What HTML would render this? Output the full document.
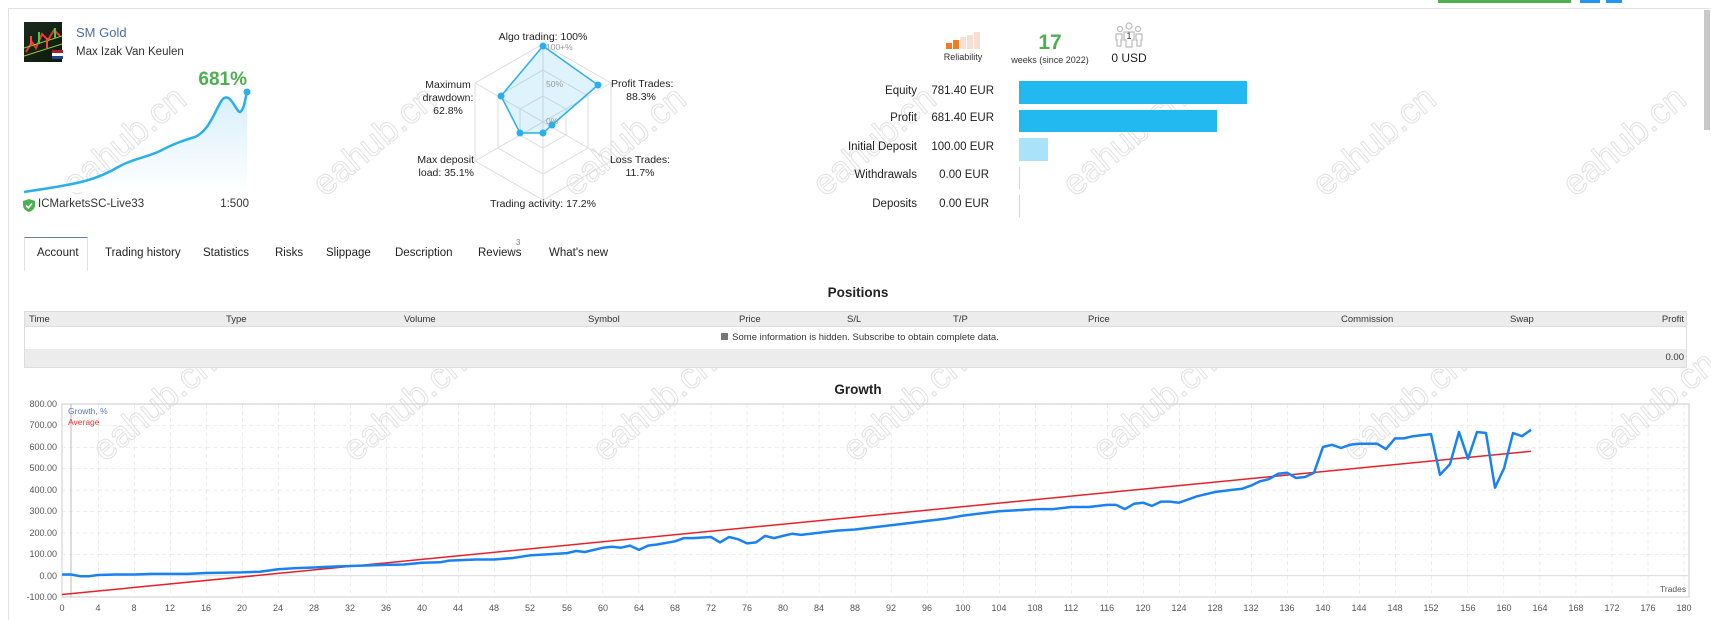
<!DOCTYPE html>
<html><head><meta charset="utf-8"><style>
*{margin:0;padding:0;box-sizing:border-box}
body{width:1711px;height:620px;background:#fff;font-family:"Liberation Sans",Arial,sans-serif;color:#222;position:relative;overflow:hidden;font-size:12px}
.a{position:absolute;white-space:nowrap}
.r{text-align:right}
.c{text-align:center}
.wm{position:absolute;font-size:36px;color:transparent;-webkit-text-stroke:1px #e2e2e2;transform:rotate(-40deg);font-family:"Liberation Sans",sans-serif;white-space:nowrap}
</style></head><body>
<div class="a" style="left:8px;top:8px;width:1px;height:612px;background:#e2e2e2"></div>
<div class="a" style="left:8px;top:8px;width:1703px;height:1px;background:#e2e2e2"></div>
<div class="a" style="left:1438px;top:0;width:133px;height:3px;background:#4caf50"></div>
<div class="a" style="left:1580px;top:0;width:20px;height:3px;background:#2196f3"></div>
<div class="a" style="left:1606px;top:0;width:16px;height:3px;background:#2196f3"></div>
<div class="a" style="left:1704px;top:10px;width:6px;height:120px;background:#c8c8c8"></div>

<!-- watermarks -->
<div class="wm" style="left:50px;top:120px">eahub.cn</div>
<div class="wm" style="left:300px;top:120px">eahub.cn</div>
<div class="wm" style="left:550px;top:120px">eahub.cn</div>
<div class="wm" style="left:800px;top:120px">eahub.cn</div>
<div class="wm" style="left:1050px;top:120px">eahub.cn</div>
<div class="wm" style="left:1300px;top:120px">eahub.cn</div>
<div class="wm" style="left:1550px;top:120px">eahub.cn</div>
<div class="wm" style="left:80px;top:385px">eahub.cn</div>
<div class="wm" style="left:330px;top:385px">eahub.cn</div>
<div class="wm" style="left:580px;top:385px">eahub.cn</div>
<div class="wm" style="left:830px;top:385px">eahub.cn</div>
<div class="wm" style="left:1080px;top:385px">eahub.cn</div>
<div class="wm" style="left:1330px;top:385px">eahub.cn</div>
<div class="wm" style="left:1580px;top:385px">eahub.cn</div>

<!-- profile -->
<div class="a" style="left:24px;top:22px;width:38px;height:40px;background:linear-gradient(135deg,#1a2a1a,#0d1a10);overflow:hidden">
<svg width="38" height="40"><path d="M2 30 L8 20 L12 26 L18 12 L24 18 L30 8 L36 14" stroke="#e33" stroke-width="2" fill="none"/><path d="M0 34 L38 22 M0 26 L38 14" stroke="#9c3" stroke-width="1"/><rect x="6" y="14" width="2" height="10" fill="#f44"/><rect x="14" y="10" width="2" height="12" fill="#4c4"/><rect x="22" y="16" width="2" height="10" fill="#f44"/><rect x="30" y="6" width="2" height="10" fill="#4c4"/></svg></div>
<div class="a" style="left:52px;top:50px;width:11px;height:9px;background:linear-gradient(#ae1c28 33%,#fff 33%,#fff 66%,#21468b 66%)"></div>
<div class="a" style="left:76px;top:25px;font-size:13px;color:#4a6ea8">SM Gold</div>
<div class="a" style="left:76px;top:46px;font-size:11.5px;color:#333">Max Izak Van Keulen</div>
<div class="a r" style="left:180px;top:69px;width:67px;font-size:19px;font-weight:bold;color:#4caf50">681%</div>
<svg class="a" style="left:0;top:0" width="260" height="200">
<defs><linearGradient id="g" x1="0" y1="0" x2="0" y2="1"><stop offset="0" stop-color="#d6eefb"/><stop offset="1" stop-color="#fff"/></linearGradient></defs>
<path d="M24 192 C50 188 70 185 85 181 C100 177 110 172 120 166 C135 158 145 158 160 151 C175 143 185 140 195 137 C210 130 215 110 222 100 C230 90 236 112 240 112 C244 110 245 100 247 92 L247 192 Z" fill="url(#g)"/>
<path d="M24 192 C50 188 70 185 85 181 C100 177 110 172 120 166 C135 158 145 158 160 151 C175 143 185 140 195 137 C210 130 215 110 222 100 C230 90 236 112 240 112 C244 110 245 100 247 92" fill="none" stroke="#29b0ea" stroke-width="2.5"/>
<circle cx="247" cy="92" r="3.5" fill="#29b0ea"/>
</svg>
<svg class="a" style="left:23px;top:199px" width="12" height="13"><path d="M6 0 L12 2 L12 6 C12 10 9 12 6 13 C3 12 0 10 0 6 L0 2 Z" fill="#4caf50"/><path d="M3 6.5 L5.3 8.8 L9 4.5" stroke="#fff" stroke-width="1.6" fill="none"/></svg>
<div class="a" style="left:38px;top:198px;font-size:11.5px;color:#333">ICMarketsSC-Live33</div>
<div class="a r" style="left:200px;top:198px;width:49px;font-size:11.5px;color:#333">1:500</div>

<!-- radar -->
<svg class="a" style="left:0;top:0" width="700" height="220" font-family="Liberation Sans" font-size="10.5">
<g fill="none" stroke="#ddd" stroke-width="1">
<polygon points="543,44 611,83 611,161 543,200 475,161 475,83"/>
<polygon points="543,70 588,96 588,148 543,174 498,148 498,96"/>
<polygon points="543,96 566,109 566,135 543,148 520,135 520,109"/>
<path d="M543 44 L543 200 M475 83 L611 161 M611 83 L475 161"/>
</g>
<polygon points="543,46 598,85 552,125 543,133 520,133 501,96" fill="rgba(41,176,234,0.15)" stroke="#29b0ea" stroke-width="1.5"/>
<g fill="#29b0ea"><circle cx="543" cy="46" r="3.5"/><circle cx="598" cy="85" r="3.5"/><circle cx="552" cy="125" r="3.5"/><circle cx="543" cy="133" r="3.5"/><circle cx="520" cy="133" r="3.5"/><circle cx="501" cy="96" r="3.5"/></g>
<g fill="#999" font-size="8.5"><text x="546" y="50">100+%</text><text x="546" y="87">50%</text><text x="546" y="124">0%</text></g>
<g fill="#222">
<text x="543" y="40" text-anchor="middle">Algo trading: 100%</text>
<text x="611" y="87" text-anchor="start">Profit Trades:</text><text x="641" y="100" text-anchor="middle">88.3%</text>
<text x="448" y="88" text-anchor="middle">Maximum</text><text x="448" y="101" text-anchor="middle">drawdown:</text><text x="448" y="114" text-anchor="middle">62.8%</text>
<text x="640" y="163" text-anchor="middle">Loss Trades:</text><text x="640" y="176" text-anchor="middle">11.7%</text>
<text x="474" y="163" text-anchor="end">Max deposit</text><text x="474" y="176" text-anchor="end">load: 35.1%</text>
<text x="543" y="207" text-anchor="middle">Trading activity: 17.2%</text>
</g></svg>

<!-- right stats -->
<div class="a" style="left:946px;top:43px;width:6px;height:6px;background:#f47b20"></div>
<div class="a" style="left:953px;top:40px;width:6px;height:9px;background:#f47b20"></div>
<div class="a" style="left:960px;top:37px;width:6px;height:12px;background:#f8ded3"></div>
<div class="a" style="left:967px;top:35px;width:6px;height:14px;background:#f8ded3"></div>
<div class="a" style="left:974px;top:32px;width:6px;height:17px;background:#f8ded3"></div>
<div class="a c" style="left:923px;top:52px;width:80px;font-size:9px;color:#333">Reliability</div>
<div class="a c" style="left:1000px;top:31px;width:100px;font-size:21px;font-weight:bold;color:#4caf50">17</div>
<div class="a c" style="left:990px;top:55px;width:120px;font-size:9px;color:#333">weeks (since 2022)</div>
<svg class="a" style="left:1114px;top:22px" width="30" height="26" fill="none" stroke="#bbb" stroke-width="1.2"><circle cx="15" cy="4" r="3"/><circle cx="6" cy="7" r="2.5"/><circle cx="24" cy="7" r="2.5"/><path d="M10 10 h10 v8 h-2 v7 h-6 v-7 h-2 z"/><path d="M2 12 h6 v6 h-1 v6 h-4 v-6 h-1 z M22 12 h6 v6 h-1 v6 h-4 v-6 h-1 z"/><text x="15" y="17" font-size="9" fill="#333" stroke="none" text-anchor="middle" font-family="Liberation Sans">1</text></svg>
<div class="a c" style="left:1089px;top:51px;width:80px;font-size:12px;color:#222">0 USD</div>

<div class="a r" style="left:800px;top:85px;width:117px;font-size:11.5px">Equity</div>
<div class="a r" style="left:800px;top:112px;width:117px;font-size:11.5px">Profit</div>
<div class="a r" style="left:800px;top:141px;width:117px;font-size:11.5px">Initial Deposit</div>
<div class="a r" style="left:800px;top:169px;width:117px;font-size:11.5px">Withdrawals</div>
<div class="a r" style="left:800px;top:198px;width:117px;font-size:11.5px">Deposits</div>
<div class="a r" style="left:900px;top:85px;width:94px;font-size:11.5px">781.40 EUR</div>
<div class="a r" style="left:900px;top:112px;width:94px;font-size:11.5px">681.40 EUR</div>
<div class="a r" style="left:900px;top:141px;width:94px;font-size:11.5px">100.00 EUR</div>
<div class="a r" style="left:900px;top:169px;width:89px;font-size:11.5px">0.00 EUR</div>
<div class="a r" style="left:900px;top:198px;width:89px;font-size:11.5px">0.00 EUR</div>
<div class="a" style="left:1019px;top:81px;width:228px;height:23px;background:#22b9f0"></div>
<div class="a" style="left:1019px;top:110px;width:198px;height:22px;background:#22b9f0"></div>
<div class="a" style="left:1019px;top:138px;width:29px;height:23px;background:#a9e2f9"></div>
<div class="a" style="left:1019px;top:167px;width:1px;height:22px;background:#a9e2f9"></div>
<div class="a" style="left:1019px;top:195px;width:1px;height:22px;background:#a9e2f9"></div>

<!-- tabs -->
<div class="a" style="left:24px;top:237px;width:64px;height:34px;border:1px solid #e3e3e3;border-top:1px solid #6880a8;border-bottom:none;background:#fff"></div>
<div class="a" style="left:37px;top:247px;font-size:11.5px">Account</div>
<div class="a" style="left:105px;top:247px;font-size:11.5px">Trading history</div>
<div class="a" style="left:203px;top:247px;font-size:11.5px">Statistics</div>
<div class="a" style="left:275px;top:247px;font-size:11.5px">Risks</div>
<div class="a" style="left:326px;top:247px;font-size:11.5px">Slippage</div>
<div class="a" style="left:395px;top:247px;font-size:11.5px">Description</div>
<div class="a" style="left:478px;top:247px;font-size:11.5px">Reviews</div>
<div class="a" style="left:516px;top:238px;font-size:8px;color:#6a8ac0">3</div>
<div class="a" style="left:549px;top:247px;font-size:11.5px">What's new</div>

<!-- positions -->
<div class="a c" style="left:758px;top:285px;width:200px;font-size:13.5px;font-weight:bold">Positions</div>
<div class="a" style="left:24px;top:311px;width:1663px;height:57px;border:1px solid #ddd"></div>
<div class="a" style="left:25px;top:312px;width:1661px;height:15px;background:#ececec;border-bottom:1px solid #ddd"></div>
<div class="a" style="left:25px;top:349px;width:1661px;height:18px;background:#ececec"></div>
<div style="font-size:9.5px;color:#333">
<div class="a" style="left:29px;top:314px">Time</div>
<div class="a" style="left:226px;top:314px">Type</div>
<div class="a" style="left:404px;top:314px">Volume</div>
<div class="a" style="left:588px;top:314px">Symbol</div>
<div class="a" style="left:739px;top:314px">Price</div>
<div class="a" style="left:847px;top:314px">S/L</div>
<div class="a" style="left:953px;top:314px">T/P</div>
<div class="a" style="left:1088px;top:314px">Price</div>
<div class="a" style="left:1341px;top:314px">Commission</div>
<div class="a" style="left:1510px;top:314px">Swap</div>
<div class="a r" style="left:1600px;top:314px;width:84px">Profit</div>
<div class="a c" style="left:660px;top:332px;width:400px"><span style="display:inline-block;width:7px;height:7px;background:#777;margin-right:4px"></span>Some information is hidden. Subscribe to obtain complete data.</div>
<div class="a r" style="left:1600px;top:352px;width:84px">0.00</div>
</div>

<!-- growth -->
<div class="a c" style="left:758px;top:382px;width:200px;font-size:13.5px;font-weight:bold">Growth</div>
<svg class="a" style="left:0;top:0" width="1711" height="620" font-family="Liberation Sans">
<defs><pattern id="p" x="62" y="404.1" width="36.04" height="21.44" patternUnits="userSpaceOnUse">
<path d="M0 0 V21.44" stroke="#ddd" stroke-dasharray="4,3"/><path d="M0 0 H36.04" stroke="#ddd" stroke-dasharray="4,3"/></pattern></defs>
<rect x="62" y="404" width="1627" height="193" fill="url(#p)"/>
<rect x="62" y="404" width="1627" height="193" fill="none" stroke="#ccc"/>
<line x1="71" y1="404" x2="71" y2="597" stroke="#bbb"/>
<line x1="62" y1="575.6" x2="1689" y2="575.6" stroke="#ddd"/>
<text x="68" y="414" font-size="8.5" fill="#5577cc">Growth, %</text>
<text x="68" y="425" font-size="8.5" fill="#e33">Average</text>
<text x="1660" y="592" font-size="8.5" fill="#555">Trades</text>
<g font-size="9" fill="#555" text-anchor="end">
<text x="57" y="407">800.00</text><text x="57" y="428">700.00</text><text x="57" y="450">600.00</text><text x="57" y="471">500.00</text><text x="57" y="493">400.00</text><text x="57" y="514">300.00</text><text x="57" y="536">200.00</text><text x="57" y="557">100.00</text><text x="57" y="579">0.00</text><text x="57" y="600">-100.00</text></g>
<g font-size="9" fill="#555" text-anchor="middle">
<text x="62" y="611">0</text><text x="98" y="611">4</text><text x="134" y="611">8</text><text x="170" y="611">12</text><text x="206" y="611">16</text><text x="242" y="611">20</text><text x="278" y="611">24</text><text x="314" y="611">28</text><text x="350" y="611">32</text><text x="386" y="611">36</text><text x="422" y="611">40</text><text x="458" y="611">44</text><text x="494" y="611">48</text><text x="530" y="611">52</text><text x="567" y="611">56</text><text x="603" y="611">60</text><text x="639" y="611">64</text><text x="675" y="611">68</text><text x="711" y="611">72</text><text x="747" y="611">76</text><text x="783" y="611">80</text><text x="819" y="611">84</text><text x="855" y="611">88</text><text x="891" y="611">92</text><text x="927" y="611">96</text><text x="963" y="611">100</text><text x="999" y="611">104</text><text x="1035" y="611">108</text><text x="1071" y="611">112</text><text x="1107" y="611">116</text><text x="1143" y="611">120</text><text x="1179" y="611">124</text><text x="1215" y="611">128</text><text x="1251" y="611">132</text><text x="1287" y="611">136</text><text x="1323" y="611">140</text><text x="1359" y="611">144</text><text x="1395" y="611">148</text><text x="1431" y="611">152</text><text x="1468" y="611">156</text><text x="1504" y="611">160</text><text x="1540" y="611">164</text><text x="1576" y="611">168</text><text x="1612" y="611">172</text><text x="1648" y="611">176</text><text x="1684" y="611">180</text></g>
<line x1="62" y1="594.5" x2="1531" y2="451.3" stroke="#e8202a" stroke-width="1.5"/>
<polyline fill="none" stroke="#1a82f0" stroke-width="2.5" stroke-linejoin="round" points="62,574.5 71,574.5 80,576.2 89,576.2 98,575 116,574.5 134,574.5 152,573.9 188,573.9 206,573 242,572.4 260,571.7 278,569.2 296,568.1 314,567.5 332,566.6 350,566 386,564.9 404,564.5 422,562.7 440,562.3 449,560.6 476,559.5 494,559.5 513,558 531,555.2 549,554.2 567,553.1 576,551 585,552 603,547.7 612,546.7 621,547.7 630,545.6 639,549.9 648,545.6 657,544.5 675,541.3 684,538.1 693,538.1 711,537 720,542.4 729,537 738,539.2 747,543.4 756,542.4 765,535.9 774,538.1 783,535.9 792,533.8 801,534.9 819,532.7 837,530.6 855,529.5 873,527.4 891,525.2 909,523.1 927,520.9 945,518.8 963,515.6 981,513.4 999,511.3 1017,510.2 1035,509.1 1053,509.1 1071,507 1089,507 1107,504.9 1116,504.9 1125,509.1 1134,503.8 1143,502.7 1152,505.9 1161,501.6 1170,501.6 1179,502.7 1197,496.3 1215,492 1233,489.8 1242,488.8 1251,485.6 1260,481.3 1269,479.1 1278,473.8 1287,472.7 1296,478 1305,477 1314,472.7 1323,447 1332,444.8 1341,448 1350,444.8 1359,443.7 1377,443.7 1386,449.1 1395,438.4 1404,438.4 1413,436.2 1431,434.1 1440,474.8 1450,464.1 1459,432 1468,458.8 1477,432 1486,433 1495,487.7 1504,468.4 1513,433 1522,436.2 1531,429.8"/>
</svg>
</body></html>
